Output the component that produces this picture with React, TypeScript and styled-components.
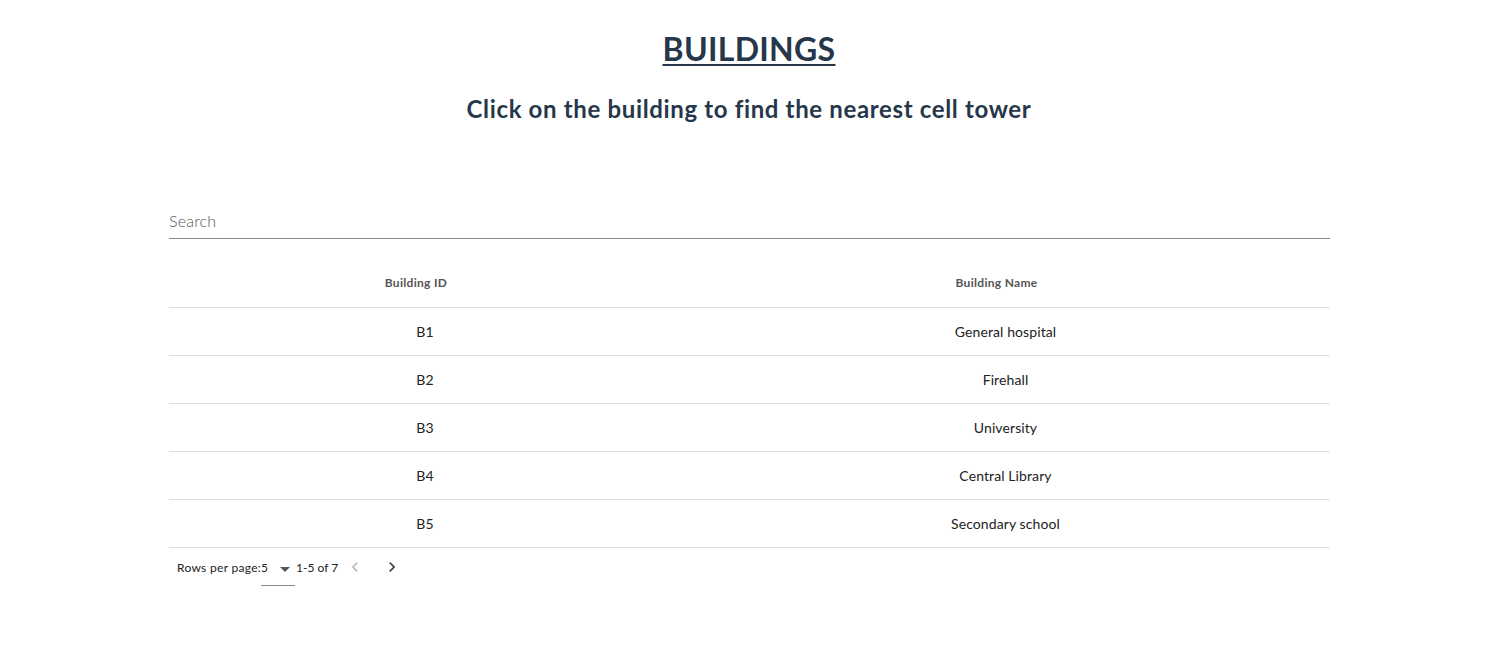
import React from "react";
import styled, { createGlobalStyle } from "styled-components";

const Global = createGlobalStyle`
  html, body { margin: 0; padding: 0; background: #fff; }
  body { font-family: "Lato", "Noto Sans", sans-serif; color: #2b3a4a; }
`;

const Page = styled.div`
  display: flex;
  flex-direction: column;
  align-items: center;
  padding-top: 29px;
`;

const Title = styled.h1`
  margin: 0;
  font-size: 32px;
  font-weight: 700;
  letter-spacing: 0.3px;
  color: #26374a;
  text-decoration: underline;
  text-decoration-thickness: 2px;
  text-underline-offset: 3px;
  line-height: 40px;
  transform: translateX(5px);
`;

const Subtitle = styled.h2`
  margin: 25px 0 0;
  font-size: 24px;
  font-weight: 700;
  letter-spacing: 0.65px;
  color: #26374a;
  line-height: 30px;
  transform: translateX(5px);
`;

const Panel = styled.div`
  align-self: stretch;
  margin: 84px 158px 0 169px;
  display: flex;
  flex-direction: column;
`;

const SearchInput = styled.input`
  border: none;
  border-bottom: 1px solid #8a8a8a;
  outline: none;
  font-family: inherit;
  font-size: 16px;
  font-weight: 300;
  letter-spacing: 0.2px;
  color: #555;
  padding: 0 0 5px;
  height: 25px;
  box-sizing: content-box;
  &::placeholder { color: #555; }
`;

const Table = styled.div`
  margin-top: 19px;
  display: grid;
  grid-template-columns: 512px 1fr;
`;

const HeadCell = styled.div`
  height: 49px;
  display: flex;
  align-items: center;
  justify-content: center;
  border-bottom: 1px solid #e0e0e0;
  font-size: 12px;
  font-weight: 700;
  letter-spacing: 0.3px;
  color: #555;
  padding-right: 18px;
`;

const Cell = styled.div`
  height: 47px;
  display: flex;
  align-items: center;
  justify-content: center;
  border-bottom: 1px solid #e0e0e0;
  font-size: 14px;
  letter-spacing: 0.1px;
  color: #222;
  cursor: pointer;
`;

const Pager = styled.div`
  display: flex;
  align-items: center;
  height: 38px;
  padding-left: 8px;
  font-size: 12px;
  letter-spacing: 0.3px;
  color: #222;
`;

const SelectBox = styled.div`
  display: flex;
  align-items: center;
  width: 34px;
  height: 36px;
  margin-top: 1px;
  border-bottom: 1px solid #8a8a8a;
  box-sizing: border-box;
  padding-top: 1px;
`;

const SelectValue = styled.span`
  flex: 1;
`;

const Caret = styled.svg`
  width: 24px;
  height: 24px;
  margin-right: -2px;
  margin-top: 2px;
  fill: #555;
`;

const Range = styled.span`
  margin-left: 1px;
  letter-spacing: 0;
`;

const NavButton = styled.button<{ $disabled?: boolean }>`
  border: none;
  background: none;
  padding: 0;
  width: 24px;
  height: 24px;
  margin-left: ${(p) => (p.$disabled ? "5px" : "13px")};
  display: flex;
  align-items: center;
  justify-content: center;
  cursor: pointer;
  svg { width: 20px; height: 20px; fill: ${(p) => (p.$disabled ? "#bdbdbd" : "#444")}; }
`;

const rows = [
  ["B1", "General hospital"],
  ["B2", "Firehall"],
  ["B3", "University"],
  ["B4", "Central Library"],
  ["B5", "Secondary school"],
];

export default function App() {
  return (
    <>
      <Global />
      <Page>
        <Title>BUILDINGS</Title>
        <Subtitle>Click on the building to find the nearest cell tower</Subtitle>
        <Panel>
          <SearchInput placeholder="Search" />
          <Table>
            <HeadCell>Building ID</HeadCell>
            <HeadCell>Building Name</HeadCell>
            {rows.map(([id, name]) => (
              <React.Fragment key={id}>
                <Cell>{id}</Cell>
                <Cell>{name}</Cell>
              </React.Fragment>
            ))}
          </Table>
          <Pager>
            <span>Rows per page:</span>
            <SelectBox>
              <SelectValue>5</SelectValue>
              <Caret viewBox="0 0 24 24"><path d="M7 10l5 5 5-5z" /></Caret>
            </SelectBox>
            <Range>1-5 of 7</Range>
            <NavButton $disabled aria-label="previous">
              <svg viewBox="0 0 24 24"><path d="M15.41 7.41 14 6l-6 6 6 6 1.41-1.41L10.83 12z" /></svg>
            </NavButton>
            <NavButton aria-label="next">
              <svg viewBox="0 0 24 24"><path d="M10 6 8.59 7.41 13.17 12l-4.58 4.59L10 18l6-6z" /></svg>
            </NavButton>
          </Pager>
        </Panel>
      </Page>
    </>
  );
}
